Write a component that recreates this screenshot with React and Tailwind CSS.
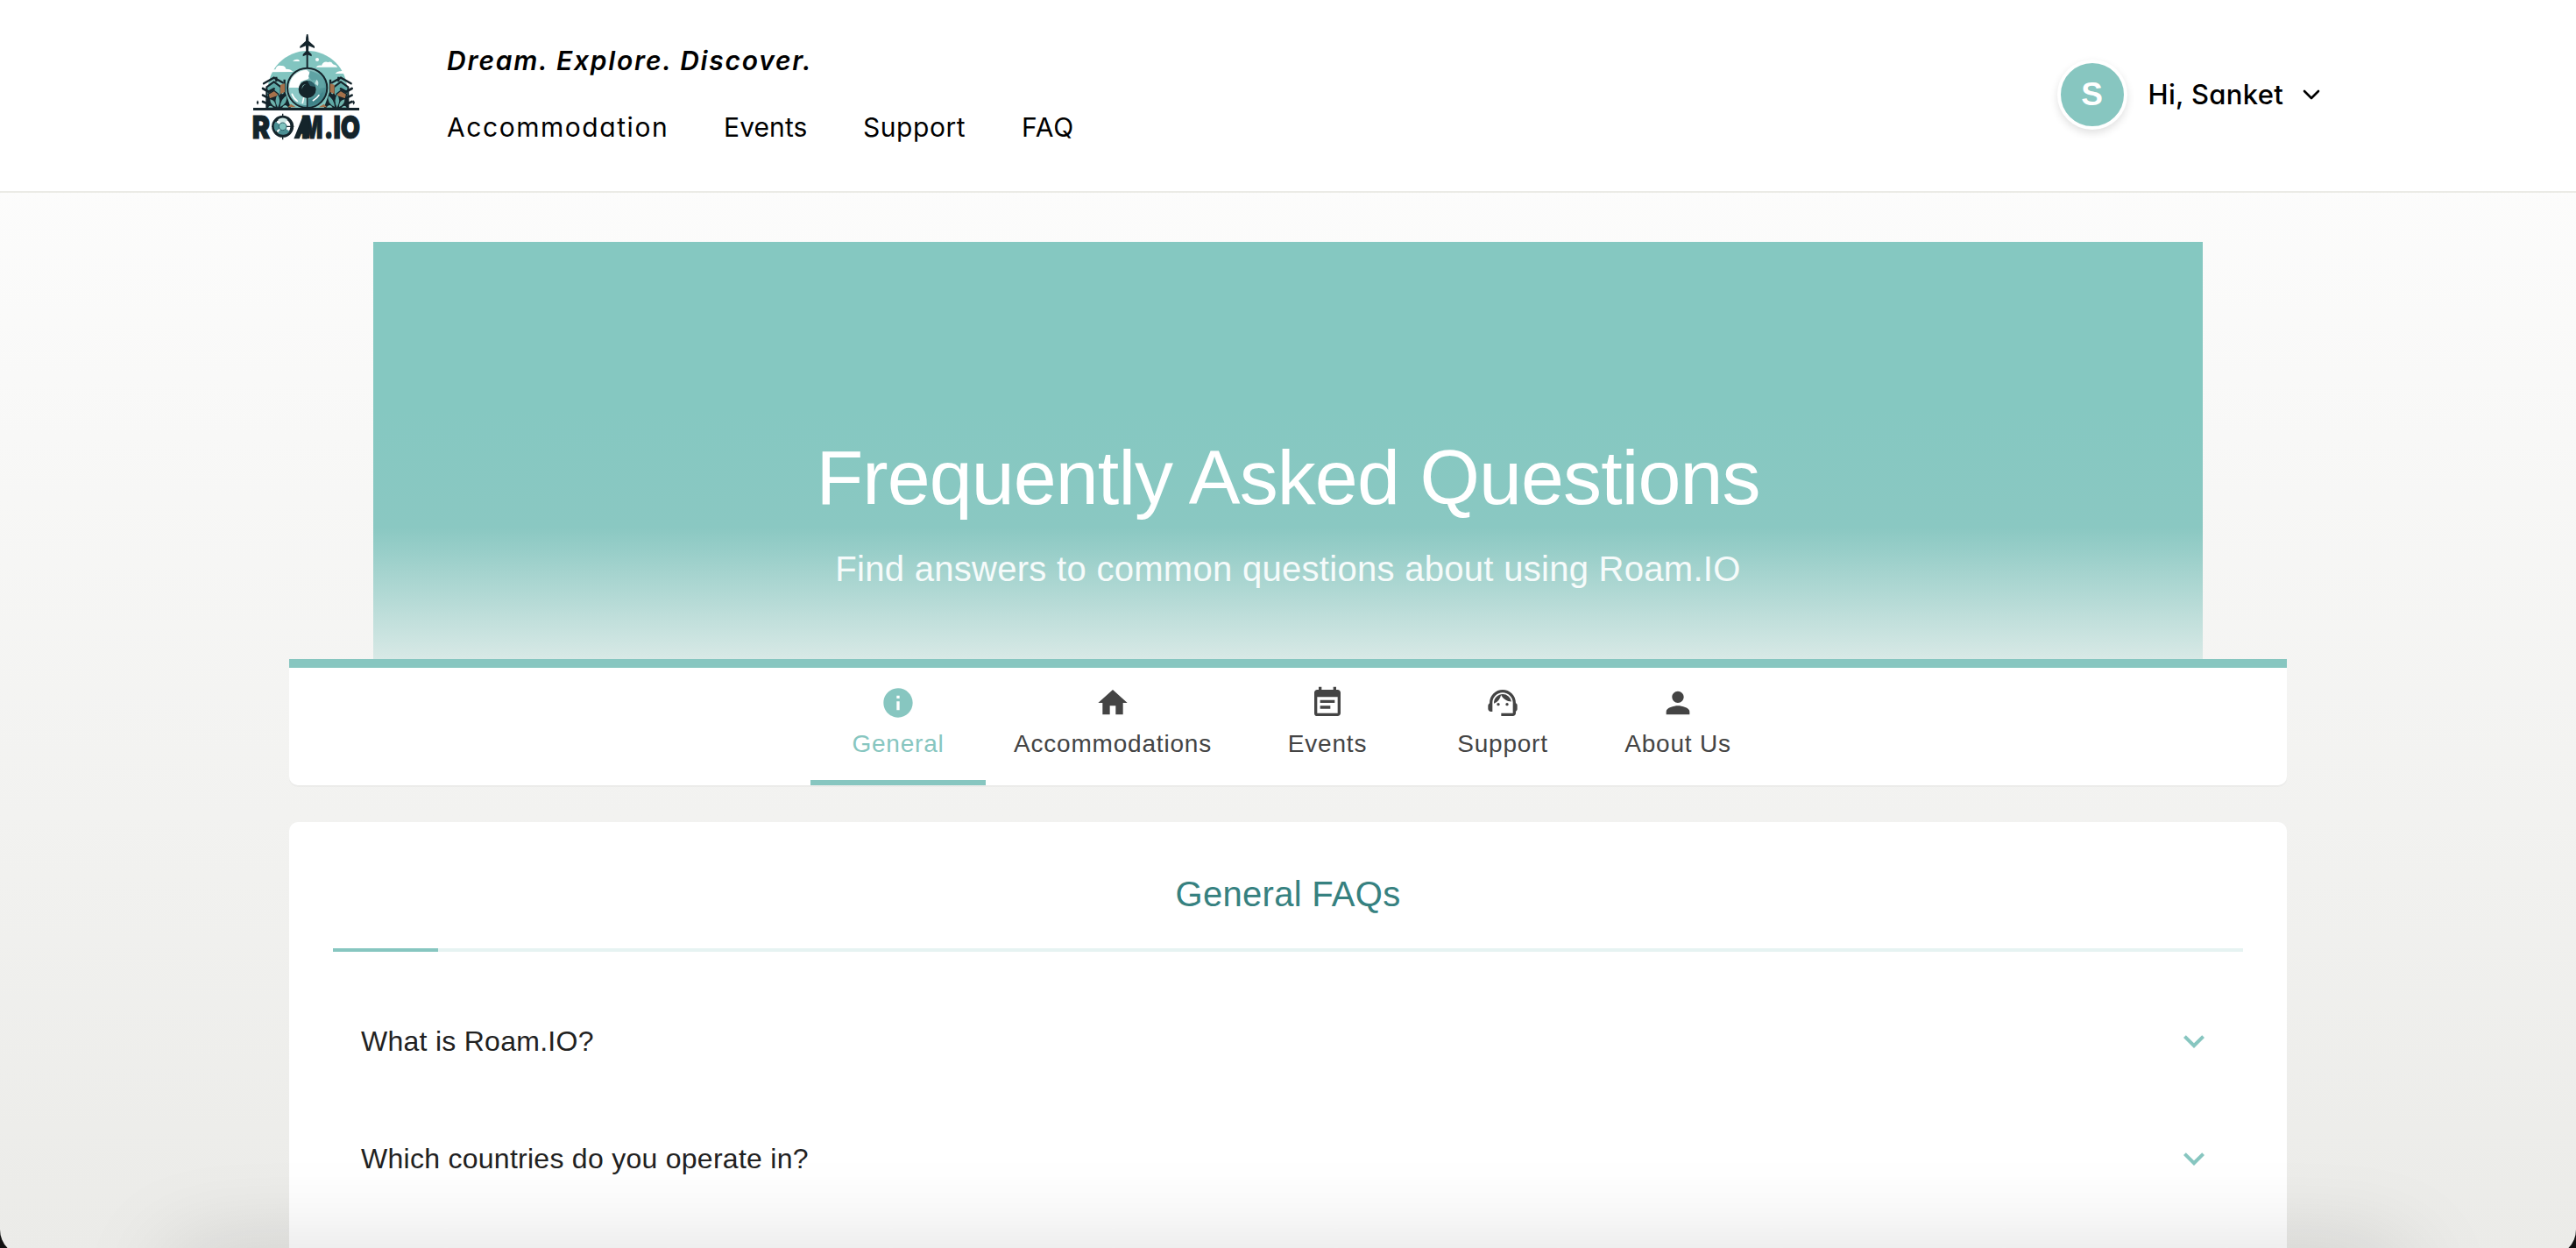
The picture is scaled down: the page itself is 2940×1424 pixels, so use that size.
import React from "react";
import { MdInfo, MdHome, MdEventNote, MdSupportAgent, MdPerson, MdExpandMore } from "react-icons/md";

const NAV = [
  { label: "Accommodation", className: "w-[316px] tracking-[1.55px]" },
  { label: "Events", className: "w-[159px] tracking-[0.1px]" },
  { label: "Support", className: "w-[181px] tracking-[0.55px]" },
  { label: "FAQ", className: "w-[64px] tracking-[0.85px]" },
];

const TABS = [
  { label: "General", Icon: MdInfo, active: true },
  { label: "Accommodations", Icon: MdHome, wide: true },
  { label: "Events", Icon: MdEventNote },
  { label: "Support", Icon: MdSupportAgent },
  { label: "About Us", Icon: MdPerson },
];

const QUESTIONS = ["What is Roam.IO?", "Which countries do you operate in?"];

function House() {
  return (
    <g>
      <path d="M103 208 L128 190 L152 208 V278 H103Z" fill="#5fa9a6" stroke="#14242b" strokeWidth="6" />
      <path d="M93 196 L128 176 L158 193" fill="none" stroke="#14242b" strokeWidth="7" strokeLinecap="round" />
      <path d="M136 173 V190 M164 182 V278" stroke="#14242b" strokeWidth="7" />
      <path d="M90 213 L110 224 L128 214 M90 236 L110 246 L124 238 M90 258 L112 268" fill="none" stroke="#14242b" strokeWidth="8" strokeLinecap="round" />
      <path d="M150 200 L165 196 V225 L150 232Z" fill="#a5714b" />
      <path d="M108 232 L128 220 L143 232 L140 248 L112 248Z" fill="#a5714b" stroke="#14242b" strokeWidth="4" />
      <path d="M104 280 V250 L168 228 L186 280Z" fill="#14242b" />
      <path d="M141 278 Q126 252 141 234 Q154 254 141 278Z" fill="#5fa9a6" />
      <path d="M134 276 Q114 268 115 250 Q134 254 134 276Z" fill="#6fb3ac" />
      <path d="M149 276 Q152 248 171 238 Q176 264 149 276Z" fill="#5fa9a6" />
      <path d="M108 278 Q114 266 126 278Z M156 278 Q166 262 178 278Z" fill="#7fc4bf" />
      <path d="M176 277 L186 266 L203 277Z" fill="#a5714b" />
    </g>
  );
}

function Logo() {
  return (
    <svg className="mt-[38px] -ml-[2px] h-[140px] w-[128px] shrink-0" viewBox="48 24 384 420">
      <defs>
        <clipPath id="sky"><rect x="90" y="80" width="310" height="200" /></clipPath>
        <linearGradient id="iris" x1="0" y1="0" x2="1" y2="1">
          <stop offset="0" stopColor="#cfe9e6" />
          <stop offset="0.5" stopColor="#6aaead" />
          <stop offset="1" stopColor="#2f6f78" />
        </linearGradient>
      </defs>
      <g clipPath="url(#sky)">
        <circle cx="243" cy="220" r="136" fill="#82c5c0" />
        <path d="M112 157 Q118 146 133 148 Q138 132 152 135 Q166 133 169 146 Q186 146 194 156Z" fill="#fff" />
        <path d="M272 140 Q277 132 291 134 Q298 118 313 123 Q325 118 330 130 Q342 132 346 140Z" fill="#fff" />
        <path d="M338 162 Q345 152 356 154 Q364 148 378 162Z M192 119 Q200 112 212 114 Q216 117 216 120Z" fill="#fff" />
        <circle cx="276" cy="114" r="6" fill="#fff" />
      </g>
      <House />
      <g transform="translate(485 0) scale(-1 1)"><House /></g>
      <path d="M242 30 V146" stroke="#14242b" strokeWidth="6" strokeLinecap="round" />
      <path d="M242 30 Q247 34 247 50 L267 68 V75 L247 67 L246 85 L257 96 V103 L242 97 L227 103 V96 L238 85 L237 67 L217 75 V68 L237 50 Q237 34 242 30Z" fill="#14242b" />
      <circle cx="242" cy="211" r="68" fill="url(#iris)" stroke="#14242b" strokeWidth="6" />
      <path d="M180 210 A62 62 0 0 1 240 149 L252 160 L246 180 L220 190 L212 212Z" fill="#fff" />
      <path d="M180 210 H216 Q218 234 240 246 V271 Q186 268 180 210Z" fill="#8cc9c7" />
      <path d="M252 152 Q300 164 303 210 L282 212 Q288 190 268 182 L258 186 L246 172Z" fill="#5fa3a4" />
      <path d="M274 182 Q284 190 278 204 L268 196Z" fill="#c6e4e2" />
      <path d="M246 250 Q284 246 296 222 Q294 262 246 273Z" fill="#3f8389" />
      <path d="M195 184 Q203 168 220 163 M190 232 Q196 248 208 256 M262 254 Q276 246 282 236 M230 244 L226 262" fill="none" stroke="#fff" strokeWidth="5" strokeLinecap="round" />
      <circle cx="242" cy="216" r="30" fill="#14242b" />
      <path d="M242 186 A30 30 0 0 1 271 208 L252 204Z" fill="#2d5f68" />
      <path d="M238 198 Q226 202 224 216 Q222 200 238 198Z" fill="#8cc9c7" />
      <path d="M242 216 V278" stroke="#14242b" strokeWidth="5" />
      <rect x="57" y="279" width="363" height="9" fill="#14242b" />
      <path d="M72 253 L76 261 L72 269 L68 261Z M401 253 L405 261 L401 269 L397 261Z" fill="#14242b" />
      <g fill="#14242b" stroke="#14242b" strokeWidth="3" fontFamily="Inter" fontWeight="900" fontSize="108">
        <text transform="translate(53 384) scale(0.85 1)">R</text>
        <text transform="translate(222 384) scale(0.71 1)">M</text>
        <text transform="translate(299 384) scale(0.8 1)">.IO</text>
      </g>
      <path d="M196 385 L228 305 H246 L250 385 H232 L230 368 H222 L215 385Z" fill="#14242b" />
      <circle cx="158" cy="343" r="32" fill="#fff" stroke="#14242b" strokeWidth="11" />
      <path d="M158 299 V388 M120 343 H196" stroke="#14242b" strokeWidth="4" />
      <path d="M158 343 L133 326 A30 30 0 0 0 134 360Z M158 343 L182 360 A30 30 0 0 1 140 365Z" fill="#4b8f93" />
      <path d="M158 343 L142 319 A28 28 0 0 1 174 319Z" fill="#cfe9e6" />
      <circle cx="158" cy="343" r="13" fill="#7fc4bf" stroke="#2d5f68" strokeWidth="3" />
    </svg>
  );
}

function Header() {
  return (
    <header className="flex h-[220px] items-start border-b-2 border-[#ebebe6] bg-white pr-[287px] pl-[288px] font-[Inter,sans-serif] text-black [font-feature-settings:'cv11']">
      <Logo />
      <div className="ml-[96px] flex flex-col pt-[47px]">
        <p className="text-[30px] leading-[45px] font-semibold tracking-[1.75px] whitespace-nowrap italic">
          Dream. Explore. Discover.
        </p>
        <nav className="mt-[30px] flex text-[30px] leading-[46px] whitespace-nowrap">
          {NAV.map((n) => (
            <a key={n.label} className={n.className}>{n.label}</a>
          ))}
        </nav>
      </div>
      <div className="mt-[68px] ml-auto flex items-center">
        <div className="flex h-20 w-20 items-center justify-center rounded-full border-4 border-white bg-[#87c6c0] font-['Liberation_Sans',sans-serif] text-[37px] font-bold text-white shadow-[0_4px_10px_rgba(0,0,0,0.12)]">
          S
        </div>
        <span className="ml-[24px] text-[31px] leading-[46px] font-medium tracking-[0.3px] whitespace-nowrap">
          Hi, Sanket
        </span>
        <svg className="mr-[5px] ml-[22px] h-3 w-5" viewBox="0 0 20 12" fill="none" stroke="#000" strokeWidth="2.6" strokeLinecap="round" strokeLinejoin="round">
          <path d="M2 2 L10 10 L18 2" />
        </svg>
      </div>
    </header>
  );
}

function Hero() {
  return (
    <section className="mx-auto mt-[56px] flex h-[476px] w-[2088px] flex-col items-center bg-[linear-gradient(to_bottom,#85c8c1_0px,#85c8c1_190px,#8ac8c2_326px,#d8e9e6_476px)] text-white">
      <h1 className="mt-[219px] text-[88px] leading-[100px] tracking-[-0.9px] whitespace-nowrap">
        Frequently Asked Questions
      </h1>
      <p className="mt-[28px] text-[40px] leading-[52px] tracking-[0.29px] whitespace-nowrap text-white/90">
        Find answers to common questions about using Roam.IO
      </p>
    </section>
  );
}

function Tabs() {
  return (
    <div className="mx-auto flex h-[144px] w-[2280px] justify-center rounded-b-[10px] border-t-[10px] border-[#87c6c0] bg-white shadow-[0_2px_1px_rgba(0,0,0,0.03)]">
      {TABS.map(({ label, Icon, active, wide }) => (
        <div
          key={label}
          className={`flex flex-col items-center pt-5 ${wide ? "w-[290px]" : "w-[200px]"} ${active ? "border-b-[6px] border-[#87c6c0] text-[#87c6c0]" : "text-[#444444]"}`}
        >
          <Icon size={40} />
          <span className="mt-[9px] text-[28px] leading-[36px] tracking-[0.8px] whitespace-nowrap">{label}</span>
        </div>
      ))}
    </div>
  );
}

function FaqCard() {
  return (
    <section className="mx-auto mt-[42px] w-[2280px] rounded-t-[10px] bg-white px-[50px]">
      <h2 className="pt-[56px] text-center text-[40px] leading-[52px] tracking-[0.3px] text-[#368180]">
        General FAQs
      </h2>
      <div className="mt-[36px] h-1 bg-[#e6f3f2]">
        <div className="h-full w-[120px] bg-[#87c6c0]" />
      </div>
      <ul className="pt-[35px]">
        {QUESTIONS.map((q) => (
          <li key={q} className="flex h-[134px] items-center justify-between pr-8 pl-8 text-[32px] tracking-[0.27px] text-[#212121]">
            <span>{q}</span>
            <MdExpandMore size={48} className="text-[#87c6c0]" />
          </li>
        ))}
      </ul>
      <div className="h-[200px]" />
    </section>
  );
}

export default function App() {
  return (
    <div className="h-[1424px] overflow-hidden bg-[#111] font-['Liberation_Sans',Arial,sans-serif]">
      <div className="relative h-[1433px] overflow-hidden rounded-b-[30px] bg-linear-to-b from-white to-[#ebebe8]">
        <Header />
        <main>
          <Hero />
          <Tabs />
          <FaqCard />
        </main>
        <div className="pointer-events-none absolute -bottom-[70px] left-[190px] h-[70px] w-[2560px] rounded-[40px] shadow-[0_0_110px_rgba(0,0,0,0.18)]" />
      </div>
    </div>
  );
}
